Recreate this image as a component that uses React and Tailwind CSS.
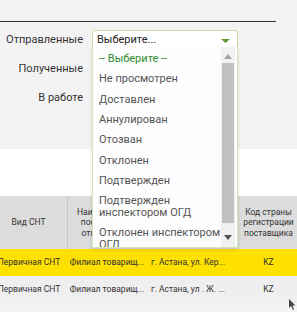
import React from 'react';

const FILTERS = ['Отправленные', 'Полученные', 'В работе'];

// long statuses are split the way the native list wraps them
const OPTIONS = [
    ['Не просмотрен'],
    ['Доставлен'],
    ['Аннулирован'],
    ['Отозван'],
    ['Отклонен'],
    ['Подтвержден'],
    ['Подтвержден', 'инспектором ОГД'],
    ['Отклонен инспектором', 'ОГД']
];

const ROWS = [
    { kind: 'Первичная СНТ', name: 'Филиал товарищ...', addr: 'г. Астана, ул. Кер...', country: 'KZ', active: true },
    { kind: 'Первичная СНТ', name: 'Филиал товарищ...', addr: 'г. Астана, ул . Ж. ...', country: 'KZ', active: false }
];

function StatusDropdown() {
    return (
        <div className="absolute left-[92px] top-[47px] w-[146px] h-[201px] flex bg-[#fdfdfd] border border-t-0 border-[#cfe6b6] shadow-[0_2px_4px_rgba(0,0,0,0.12)]">
            <div className="flex-1 min-w-0 overflow-hidden pt-[2px] pl-[6px] text-[11px] leading-[12px] text-[#555]">
                <div className="py-[4.15px] text-[#2f8a2f]">-- Выберите --</div>
                {OPTIONS.map((lines) => (
                    <div key={lines.join(' ')} className="py-[4.15px] whitespace-nowrap">
                        {lines.map((line) => (
                            <div key={line}>{line}</div>
                        ))}
                    </div>
                ))}
            </div>
            <div className="w-[14px] mr-[2px] flex flex-col items-center bg-[#f1f1f1] shrink-0">
                <svg width="14" height="16" viewBox="0 0 14 16" className="shrink-0">
                    <path d="M3 12 L7 7 L11 12 Z" fill="#a3a3a3" />
                </svg>
                <div className="w-[12px] h-[160px] bg-[#c1c1c1]" />
                <div className="flex-1" />
                <svg width="14" height="14" viewBox="0 0 14 14" className="shrink-0 mb-[2px]">
                    <path d="M3 4 L11 4 L7 9 Z" fill="#505050" />
                </svg>
            </div>
        </div>
    );
}

export default function App() {
    return (
        <div className="relative w-[297px] h-[312px] overflow-hidden bg-[#f3f3f3] [font-family:Roboto,sans-serif] text-[#222]">
            <div className="pt-[21px]">
                <div className="w-[276px] h-px bg-[#333]" />
            </div>

            <div className="flex flex-col pt-[4px] h-[127px]">
                {FILTERS.map((label, i) => (
                    <div key={label} className="flex items-center h-[29px] shrink-0">
                        <span className="w-[84px] pr-[1px] text-right text-[11px] text-[#333]">{label}</span>
                        {i === 0 && (
                            <div className="ml-[8px] w-[146px] h-[22px] flex items-center justify-between px-[4px] bg-white border border-[#c5e0a5] rounded-t-[3px] text-[11px] text-[#222]">
                                <span>Выберите...</span>
                                <svg width="9" height="6" viewBox="0 0 9 6" className="mr-[3px]">
                                    <path d="M0 1 L9 1 L4.5 5 Z" fill="#5f9a3a" />
                                </svg>
                            </div>
                        )}
                    </div>
                ))}
            </div>

            <div className="h-[47px] bg-white" />

            <div className="ml-[-10px] text-[8.5px] text-[#333]">
                <div className="flex h-[53px] bg-[#dcdcdc] text-center leading-[10.5px]">
                    <div className="w-[78px] shrink-0 flex items-center justify-center border-r border-[#c6c6c6]">Вид СНТ</div>
                    <div className="w-[78px] shrink-0 flex items-center justify-center px-[2px]">Наименование поставщика/ отправителя</div>
                    <div className="w-[94px] shrink-0 flex items-center justify-center px-[2px]">Адрес места отправки</div>
                    <div className="w-[57px] shrink-0 flex items-center justify-center">Код страны регистрации поставщика</div>
                </div>
                {ROWS.map((row, i) => (
                    <div key={i} className={`flex h-[27px] items-center whitespace-nowrap ${row.active ? 'bg-[#ffe100]' : 'bg-[#efefef]'}`}>
                        <div className="w-[78px] shrink-0 text-center">{row.kind}</div>
                        <div className="w-[78px] shrink-0 text-center">{row.name}</div>
                        <div className="w-[94px] shrink-0 pl-[5px] overflow-hidden">{row.addr}</div>
                        <div className="w-[57px] shrink-0 text-center">{row.country}</div>
                    </div>
                ))}
            </div>

            <StatusDropdown />

            <svg width="8" height="12" viewBox="0 0 8 12" className="absolute left-[289px] top-[299px]">
                <path d="M0 0 L0 9 L2 7 L4 11 L5 10.5 L3.5 6.5 L6.5 6.5 Z" fill="#444" />
            </svg>
        </div>
    );
}
